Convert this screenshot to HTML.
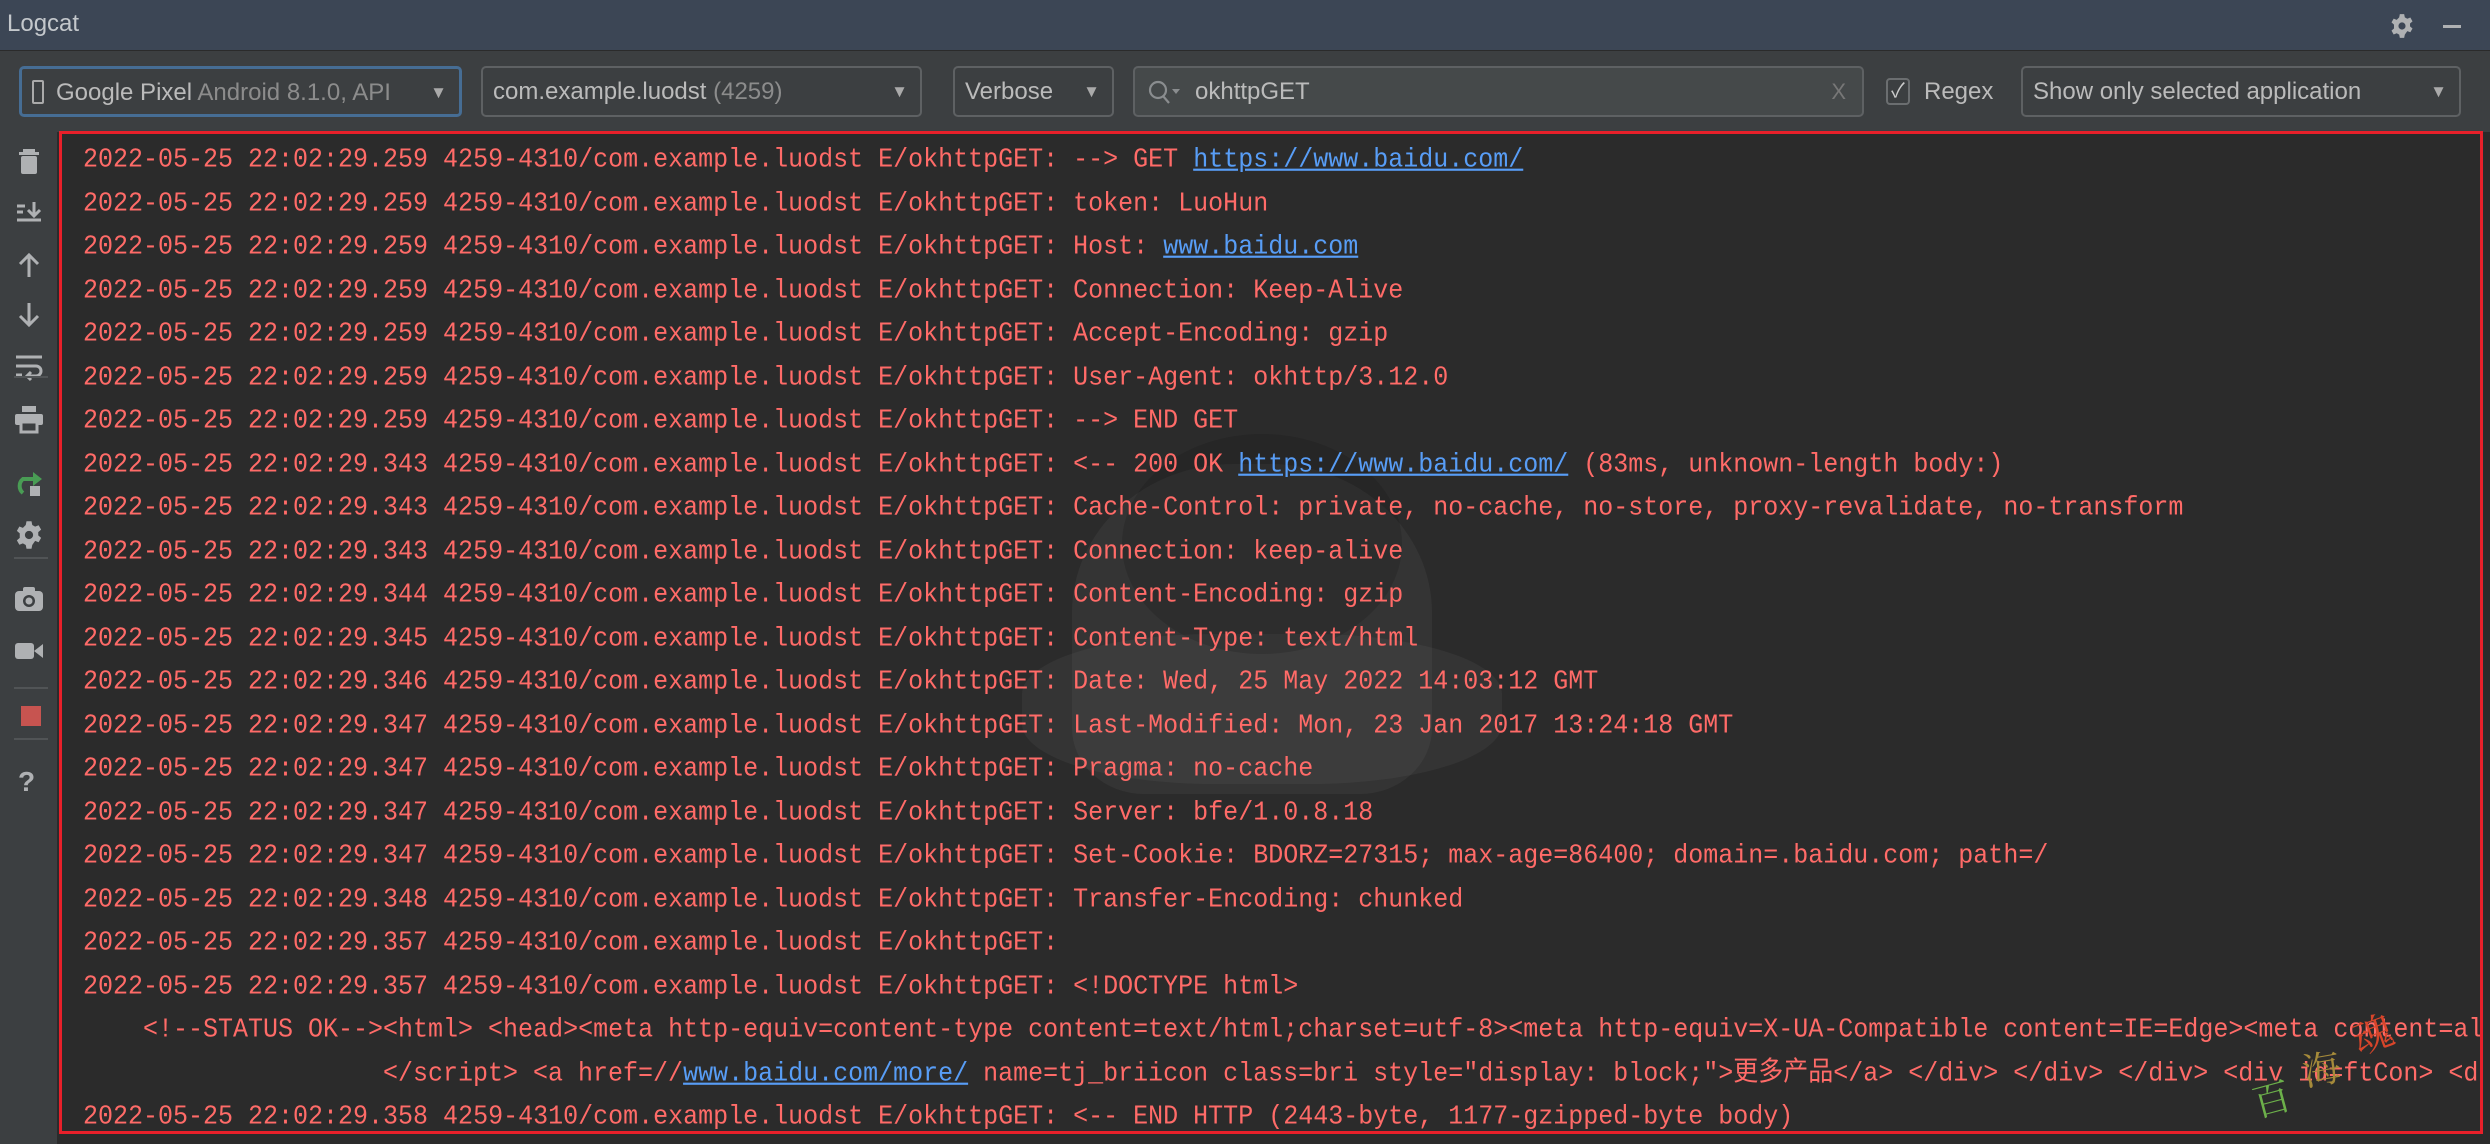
<!DOCTYPE html>
<html><head><meta charset="utf-8">
<style>
*{margin:0;padding:0;box-sizing:border-box}
body{width:2490px;height:1144px;background:#2b2b2b;position:relative;overflow:hidden;font-family:"Liberation Sans","Noto Sans CJK SC",sans-serif}
#title{position:absolute;left:0;top:0;width:2490px;height:51px;background:#3c4655;border-bottom:1px solid #2b2b2b}
#title .t{position:absolute;left:7px;top:10px;font-size:24px;color:#c4c8cc}
#bar{position:absolute;left:0;top:51px;width:2490px;height:81px;background:#3c3f41}
#side{position:absolute;left:0;top:132px;width:57px;height:1012px;background:#3c3f41}
.box{position:absolute;top:15px;height:51px;border:2px solid #5e6163;border-radius:5px;background:#3c3f41;font-size:24px;color:#bbbbbb;line-height:47px;padding-left:10px;white-space:nowrap;overflow:hidden}
.arr{position:absolute;right:12px;top:0;font-size:17px;color:#aaa}
.gray{color:#8c8c8c}
#log{position:absolute;left:59px;top:131px;width:2424px;height:1003px;border:3px solid #e8202a;background:#2b2b2b;overflow:hidden}
.ln{position:absolute;left:21px;white-space:pre;font-family:"Liberation Mono","Noto Sans CJK SC",monospace;font-size:25px;color:#ff6b68;line-height:44px;transform:scaleY(1.08);transform-origin:left center}
.ln a{color:#589df6;text-decoration:underline}
.ic{position:absolute;left:14px;width:30px;height:30px}
.sep{position:absolute;left:14px;width:34px;height:2px;background:#515456}
</style></head><body>
<div id="title"><div class="t">Logcat</div>
<svg style="position:absolute;left:2389px;top:13px" width="26" height="26" viewBox="0 0 24 24"><path fill="#afb1b3" d="M10 1h4l.6 3 2.3 1.3 2.8-1.1 2 3.5-2.3 2v2.6l2.3 2-2 3.5-2.8-1.1L14.6 20 14 23h-4l-.6-3-2.3-1.3-2.8 1.1-2-3.5 2.3-2V10.7l-2.3-2 2-3.5 2.8 1.1L9.4 4z"/><circle cx="12" cy="12" r="3.3" fill="#3c4655"/></svg>
<div style="position:absolute;left:2443px;top:25px;width:18px;height:3px;background:#afb1b3"></div>
</div>
<div id="bar">
<div class="box" style="left:19px;width:443px;border-color:#466d94;border-width:3px"><span style="display:inline-block;width:12px;height:24px;border:2px solid #aaa;border-radius:2px;vertical-align:-4px;margin-right:12px"></span>Google Pixel <span class="gray">Android 8.1.0, API</span><span class="arr">▼</span></div>
<div class="box" style="left:481px;width:441px">com.example.luodst <span class="gray">(4259)</span><span class="arr">▼</span></div>
<div class="box" style="left:953px;width:161px">Verbose<span class="arr">▼</span></div>
<div class="box" style="left:1133px;width:731px;background:#45494a;padding-left:60px">okhttpGET
<svg style="position:absolute;left:12px;top:12px" width="36" height="26" viewBox="0 0 36 26"><circle cx="11" cy="10" r="8" fill="none" stroke="#8a8d8f" stroke-width="2.2"/><path d="M16 16l6 7" stroke="#8a8d8f" stroke-width="2.2"/><path d="M25 9h8l-4 5z" fill="#8a8d8f"/></svg>
<span style="position:absolute;right:16px;top:0;color:#777;font-size:22px">X</span></div>
<div style="position:absolute;left:1886px;top:27px;width:24px;height:27px;border:2px solid #6b6e70;border-radius:4px;color:#ccc;font-size:20px;text-align:center;line-height:23px">✓</div>
<div style="position:absolute;left:1924px;top:27px;font-size:24px;color:#bbb">Regex</div>
<div class="box" style="left:2021px;width:440px">Show only selected application<span class="arr">▼</span></div>
</div>
<div id="side">
<svg class="ic" style="top:14px" viewBox="0 0 30 30"><rect x="9" y="3" width="12" height="3" fill="#afb1b3"/><rect x="5" y="6" width="20" height="3" fill="#afb1b3"/><rect x="7" y="10" width="16" height="18" rx="2" fill="#afb1b3"/></svg>
<svg class="ic" style="top:66px" viewBox="0 0 30 30"><path d="M3 8h8M3 14h6M3 22h24M20 4v14M14 12l6 6 6-6" stroke="#afb1b3" stroke-width="3" fill="none"/></svg>
<svg class="ic" style="top:118px" viewBox="0 0 30 30"><path d="M15 27V5M6 14l9-9 9 9" stroke="#afb1b3" stroke-width="3" fill="none"/></svg>
<svg class="ic" style="top:168px" viewBox="0 0 30 30"><path d="M15 3v22M6 16l9 9 9-9" stroke="#afb1b3" stroke-width="3" fill="none"/></svg>
<svg class="ic" style="top:220px" viewBox="0 0 30 30"><path d="M2 5h26M2 14h20a5 5 0 010 10h-8M2 23h6M17 20l-4 4 4 4" stroke="#afb1b3" stroke-width="3" fill="none"/></svg>
<svg class="ic" style="top:272px" viewBox="0 0 30 30"><rect x="8" y="2" width="14" height="6" fill="#afb1b3"/><rect x="1" y="10" width="28" height="11" rx="2" fill="#afb1b3"/><rect x="7" y="18" width="16" height="10" fill="#3c3f41" stroke="#afb1b3" stroke-width="3"/></svg>
<div class="sep" style="top:244px"></div>
<svg class="ic" style="top:335px" viewBox="0 0 30 30"><path d="M9 26a9 9 0 010-14h12" stroke="#499c54" stroke-width="4" fill="none"/><path d="M19 5l9 7-9 7z" fill="#499c54"/><rect x="16" y="19" width="10" height="10" fill="#afb1b3"/></svg>
<svg class="ic" style="top:388px" viewBox="0 0 24 24"><path fill="#afb1b3" d="M10 1h4l.6 3 2.3 1.3 2.8-1.1 2 3.5-2.3 2v2.6l2.3 2-2 3.5-2.8-1.1L14.6 20 14 23h-4l-.6-3-2.3-1.3-2.8 1.1-2-3.5 2.3-2V10.7l-2.3-2 2-3.5 2.8 1.1L9.4 4z"/><circle cx="12" cy="12" r="3.3" fill="#3c3f41"/></svg>
<div class="sep" style="top:425px"></div>
<svg class="ic" style="top:452px" viewBox="0 0 30 30"><rect x="1" y="7" width="28" height="20" rx="4" fill="#afb1b3"/><rect x="9" y="3" width="12" height="6" rx="2" fill="#afb1b3"/><circle cx="15" cy="17" r="6" fill="#3c3f41"/><circle cx="15" cy="17" r="3.5" fill="#afb1b3"/></svg>
<svg class="ic" style="top:504px" viewBox="0 0 30 30"><rect x="1" y="7" width="19" height="16" rx="3" fill="#afb1b3"/><path d="M20 15l9-7v14z" fill="#afb1b3"/></svg>
<div class="sep" style="top:555px"></div>
<div style="position:absolute;left:21px;top:574px;width:20px;height:20px;background:#c75450"></div>
<div class="sep" style="top:606px"></div>
<div style="position:absolute;left:18px;top:634px;font-size:28px;font-weight:bold;color:#afb1b3">?</div>
</div>
<div id="log">
<div style="position:absolute;left:1010px;top:330px;width:360px;height:330px;border-radius:45% 45% 20% 20%;background:rgba(110,110,110,0.15)"></div>
<div style="position:absolute;left:960px;top:500px;width:480px;height:150px;border-radius:40%;background:rgba(140,140,140,0.1)"></div>
<div style="position:absolute;left:1060px;top:300px;width:280px;height:220px;border-radius:50%;background:rgba(20,20,20,0.2)"></div>
<div class="ln" style="top:4px">2022-05-25 22:02:29.259 4259-4310/com.example.luodst E/okhttpGET: --&gt; GET <a>https://www.baidu.com/</a></div>
<div class="ln" style="top:47.5px">2022-05-25 22:02:29.259 4259-4310/com.example.luodst E/okhttpGET: token: LuoHun</div>
<div class="ln" style="top:91px">2022-05-25 22:02:29.259 4259-4310/com.example.luodst E/okhttpGET: Host: <a>www.baidu.com</a></div>
<div class="ln" style="top:134.5px">2022-05-25 22:02:29.259 4259-4310/com.example.luodst E/okhttpGET: Connection: Keep-Alive</div>
<div class="ln" style="top:178px">2022-05-25 22:02:29.259 4259-4310/com.example.luodst E/okhttpGET: Accept-Encoding: gzip</div>
<div class="ln" style="top:221.5px">2022-05-25 22:02:29.259 4259-4310/com.example.luodst E/okhttpGET: User-Agent: okhttp/3.12.0</div>
<div class="ln" style="top:265px">2022-05-25 22:02:29.259 4259-4310/com.example.luodst E/okhttpGET: --&gt; END GET</div>
<div class="ln" style="top:308.5px">2022-05-25 22:02:29.343 4259-4310/com.example.luodst E/okhttpGET: &lt;-- 200 OK <a>https://www.baidu.com/</a> (83ms, unknown-length body:)</div>
<div class="ln" style="top:352px">2022-05-25 22:02:29.343 4259-4310/com.example.luodst E/okhttpGET: Cache-Control: private, no-cache, no-store, proxy-revalidate, no-transform</div>
<div class="ln" style="top:395.5px">2022-05-25 22:02:29.343 4259-4310/com.example.luodst E/okhttpGET: Connection: keep-alive</div>
<div class="ln" style="top:439px">2022-05-25 22:02:29.344 4259-4310/com.example.luodst E/okhttpGET: Content-Encoding: gzip</div>
<div class="ln" style="top:482.5px">2022-05-25 22:02:29.345 4259-4310/com.example.luodst E/okhttpGET: Content-Type: text/html</div>
<div class="ln" style="top:526px">2022-05-25 22:02:29.346 4259-4310/com.example.luodst E/okhttpGET: Date: Wed, 25 May 2022 14:03:12 GMT</div>
<div class="ln" style="top:569.5px">2022-05-25 22:02:29.347 4259-4310/com.example.luodst E/okhttpGET: Last-Modified: Mon, 23 Jan 2017 13:24:18 GMT</div>
<div class="ln" style="top:613px">2022-05-25 22:02:29.347 4259-4310/com.example.luodst E/okhttpGET: Pragma: no-cache</div>
<div class="ln" style="top:656.5px">2022-05-25 22:02:29.347 4259-4310/com.example.luodst E/okhttpGET: Server: bfe/1.0.8.18</div>
<div class="ln" style="top:700px">2022-05-25 22:02:29.347 4259-4310/com.example.luodst E/okhttpGET: Set-Cookie: BDORZ=27315; max-age=86400; domain=.baidu.com; path=/</div>
<div class="ln" style="top:743.5px">2022-05-25 22:02:29.348 4259-4310/com.example.luodst E/okhttpGET: Transfer-Encoding: chunked</div>
<div class="ln" style="top:787px">2022-05-25 22:02:29.357 4259-4310/com.example.luodst E/okhttpGET: </div>
<div class="ln" style="top:830.5px">2022-05-25 22:02:29.357 4259-4310/com.example.luodst E/okhttpGET: &lt;!DOCTYPE html&gt;</div>
<div class="ln" style="top:874px;left:81px">&lt;!--STATUS OK--&gt;&lt;html&gt; &lt;head&gt;&lt;meta http-equiv=content-type content=text/html;charset=utf-8&gt;&lt;meta http-equiv=X-UA-Compatible content=IE=Edge&gt;&lt;meta content=always</div>
<div class="ln" style="top:917.5px;left:321px">&lt;/script&gt; &lt;a href=//<a>www.baidu.com/more/</a> name=tj_briicon class=bri style="display: block;"&gt;更多产品&lt;/a&gt; &lt;/div&gt; &lt;/div&gt; &lt;/div&gt; &lt;div id=ftCon&gt; &lt;div</div>
<div class="ln" style="top:961px">2022-05-25 22:02:29.358 4259-4310/com.example.luodst E/okhttpGET: &lt;-- END HTTP (2443-byte, 1177-gzipped-byte body)</div>
<div style="position:absolute;left:2290px;top:870px;font-size:40px;color:#d8452a;transform:rotate(-20deg);font-family:'Noto Serif CJK SC',serif">魂</div>
<div style="position:absolute;left:2240px;top:905px;font-size:38px;color:#a58a3a;transform:rotate(-10deg);font-family:'Noto Serif CJK SC',serif">海</div>
<div style="position:absolute;left:2190px;top:935px;font-size:38px;color:#6cb04a;transform:rotate(-15deg);font-family:'Noto Serif CJK SC',serif">百</div>
</div>
</body></html>
